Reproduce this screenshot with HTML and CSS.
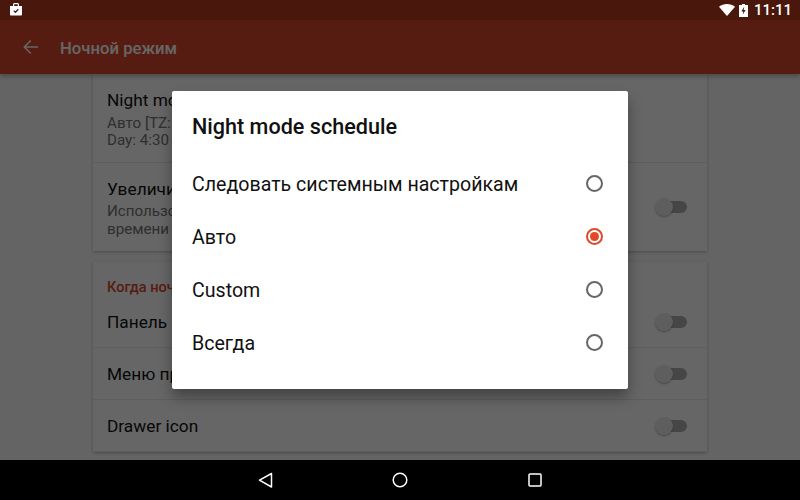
FILE: index.html
```html
<!DOCTYPE html>
<html lang="ru">
<head>
    <meta charset="UTF-8">
    <meta name="viewport" content="width=device-width, initial-scale=1.0">
    <title>Ночной режим</title>
    <link rel="stylesheet" href="styles.css">
</head>
<body>
    <div class="status-bar">
        <svg class="status-shop" width="14" height="14" viewBox="0 0 14 14">
            <path fill="#fff" d="M1 4h3V2.500C4 1.600 4.600 1 5.500 1h3c.9 0 1.500.6 1.500 1.500V4h3v8.500c0 .5-.4 1-1 1H2c-.6 0-1-.5-1-1zM5.200 4h3.600V2.200H5.200z"/>
            <path fill="none" stroke="#4a170d" stroke-width="1.300" d="M4.800 8.600l1.600 1.600 2.900-3"/>
        </svg>
        <div class="status-right">
            <svg width="16" height="12" viewBox="0 0 16 12"><path fill="#fff" d="M0 2.800C2.200 1 4.900 0 8 0s5.800 1 8 2.800L8 12z"/></svg>
            <svg class="status-battery" width="9" height="13" viewBox="0 0 9 13">
                <path fill="#fff" d="M3 0h3v1h3v12H0V1h3z"/>
                <path fill="#4a170d" d="M5.200 2.800L2.400 7.400h1.900L3.700 10.800l2.900-4.900H4.700z"/>
            </svg>
            <span class="clock">11:11</span>
        </div>
    </div>

    <div class="main">
        <header class="toolbar">
            <svg width="16" height="16" viewBox="0 0 16 16"><path fill="none" stroke="#fff" stroke-width="1.500" d="M15 8H1.500M7.800 1.500L1.300 8l6.500 6.500"/></svg>
            <h1>Ночной режим</h1>
        </header>

        <div class="content">
            <div class="card">
                <div class="row row-first">
                    <div class="row-text">
                        <div class="row-title">Night mode schedule</div>
                        <div class="row-sub">Авто [TZ: Europe/Moscow]<br>Day: 4:30 - 20:15</div>
                    </div>
                </div>
                <div class="row row-second">
                    <div class="row-text">
                        <div class="row-title">Увеличить контрастность</div>
                        <div class="row-sub">Использовать чёрный фон в тёмное<br>времени суток</div>
                    </div>
                    <span class="switch"></span>
                </div>
            </div>

            <div class="card card-lower">
                <div class="card-heading">Когда ночной режим активен</div>
                <div class="row row-plain">
                    <div class="row-title">Панель навигации</div>
                    <span class="switch"></span>
                </div>
                <div class="row row-plain">
                    <div class="row-title">Меню приложения</div>
                    <span class="switch"></span>
                </div>
                <div class="row row-plain">
                    <div class="row-title">Drawer icon</div>
                    <span class="switch"></span>
                </div>
            </div>
        </div>

        <div class="scrim">
            <div class="dialog">
                <h2>Night mode schedule</h2>
                <div class="option">
                    <span class="option-label">Следовать системным настройкам</span>
                    <span class="radio"></span>
                </div>
                <div class="option">
                    <span class="option-label">Авто</span>
                    <span class="radio checked"></span>
                </div>
                <div class="option">
                    <span class="option-label">Custom</span>
                    <span class="radio"></span>
                </div>
                <div class="option">
                    <span class="option-label">Всегда</span>
                    <span class="radio"></span>
                </div>
            </div>
        </div>
    </div>

    <div class="nav-bar">
        <svg class="nav-back" width="16" height="16" viewBox="0 0 16 16"><path fill="none" stroke="#fff" stroke-width="1.500" stroke-linejoin="round" d="M13.500 1.500v13.500L1.500 8.200z"/></svg>
        <svg width="16" height="16" viewBox="0 0 16 16"><circle cx="8" cy="8" r="6.800" fill="none" stroke="#fff" stroke-width="1.500"/></svg>
        <svg width="14" height="14" viewBox="0 0 14 14"><rect x="1" y="1" width="12" height="12" rx="1" fill="none" stroke="#fff" stroke-width="1.500"/></svg>
    </div>
</body>
</html>
```

FILE: styles.css
```css
body {
    font-family: Roboto, "Noto Sans", sans-serif;
    margin: 0;
    width: 800px;
    height: 500px;
    overflow: hidden;
    display: flex;
    flex-direction: column;
    background-color: #000;
}
.status-bar {
    height: 20px;
    flex: none;
    background-color: #4a170d;
    color: white;
    display: flex;
    justify-content: space-between;
    align-items: center;
    padding: 0 8px 0 9px;
}
.status-shop {
    margin-top: -2px;
}
.status-right {
    display: flex;
    align-items: center;
    gap: 4px;
}
.clock {
    font-size: 15px;
    font-weight: 500;
    margin-left: 2px;
}
.main {
    flex: 1;
    position: relative;
    overflow: hidden;
    background-color: #fafafa;
}
.toolbar {
    height: 54px;
    background-color: #d9472b;
    color: white;
    display: flex;
    align-items: center;
    padding-left: 23px;
    box-shadow: 0 2px 5px rgba(0,0,0,0.3);
    position: relative;
}
.toolbar h1 {
    font-size: 16.700px;
    font-weight: 500;
    margin: 2px 0 0 21px;
}
.content {
    width: 614px;
    margin: 0 auto;
}
.card {
    background-color: white;
    box-shadow: 0 1px 3px rgba(0,0,0,0.25);
}
.card-lower {
    margin-top: 11px;
}
.row {
    box-sizing: border-box;
    display: flex;
    justify-content: space-between;
    align-items: center;
    padding: 0 20px 0 14px;
    border-bottom: 1px solid #ececec;
}
.row-first {
    height: 89px;
    padding-top: 3px;
}
.row-first .row-sub {
    margin-top: 5px;
    line-height: 17px;
}
.row-second {
    height: 88px;
    padding-top: 2px;
    border-bottom: none;
}
.row-second .switch {
    margin-top: -2px;
}
.row-plain {
    height: 52px;
}
.row-title {
    font-size: 17.300px;
    color: #111;
}
.row-sub {
    font-size: 15.200px;
    line-height: 18px;
    color: #757575;
    margin-top: 3px;
}
.card-heading {
    font-size: 14.500px;
    font-weight: 500;
    color: #d9472b;
    padding: 17px 14px 0;
}
.switch {
    display: block;
    width: 30px;
    height: 12px;
    border-radius: 6px;
    background-color: #b0b0b0;
    position: relative;
}
.switch::before {
    content: "";
    position: absolute;
    left: -2px;
    top: -3px;
    width: 18px;
    height: 18px;
    border-radius: 50%;
    background-color: #ececec;
    box-shadow: 0 1px 2px rgba(0,0,0,0.3);
}
.scrim {
    position: absolute;
    inset: 0;
    background-color: rgba(0,0,0,0.6);
    display: flex;
    justify-content: center;
    align-items: center;
}
.dialog {
    width: 456px;
    height: 298px;
    box-sizing: border-box;
    background-color: white;
    border-radius: 2px;
    box-shadow: 0 8px 14px rgba(0,0,0,0.35);
    padding: 0 20px;
}
.dialog h2 {
    font-size: 21.600px;
    font-weight: 500;
    color: #111;
    margin: 0 0 3px;
    padding-top: 24px;
    height: 39px;
    line-height: 24px;
}
.option {
    height: 53px;
    display: flex;
    justify-content: space-between;
    align-items: center;
    font-size: 19.600px;
    color: #111;
}
.option-label {
    margin-top: 2px;
}
.radio {
    box-sizing: border-box;
    width: 17px;
    height: 17px;
    border: 2px solid #666;
    border-radius: 50%;
    margin-right: 5px;
    display: flex;
    justify-content: center;
    align-items: center;
}
.radio.checked {
    border-color: #e0492a;
}
.radio.checked::before {
    content: "";
    width: 9px;
    height: 9px;
    border-radius: 50%;
    background-color: #e0492a;
}
.nav-bar {
    height: 40px;
    flex: none;
    background-color: #000;
    display: flex;
    justify-content: center;
    align-items: center;
    gap: 120px;
    padding-right: 3px;
}
.nav-back {
    margin-right: -2px;
    margin-left: 2px;
}
```
